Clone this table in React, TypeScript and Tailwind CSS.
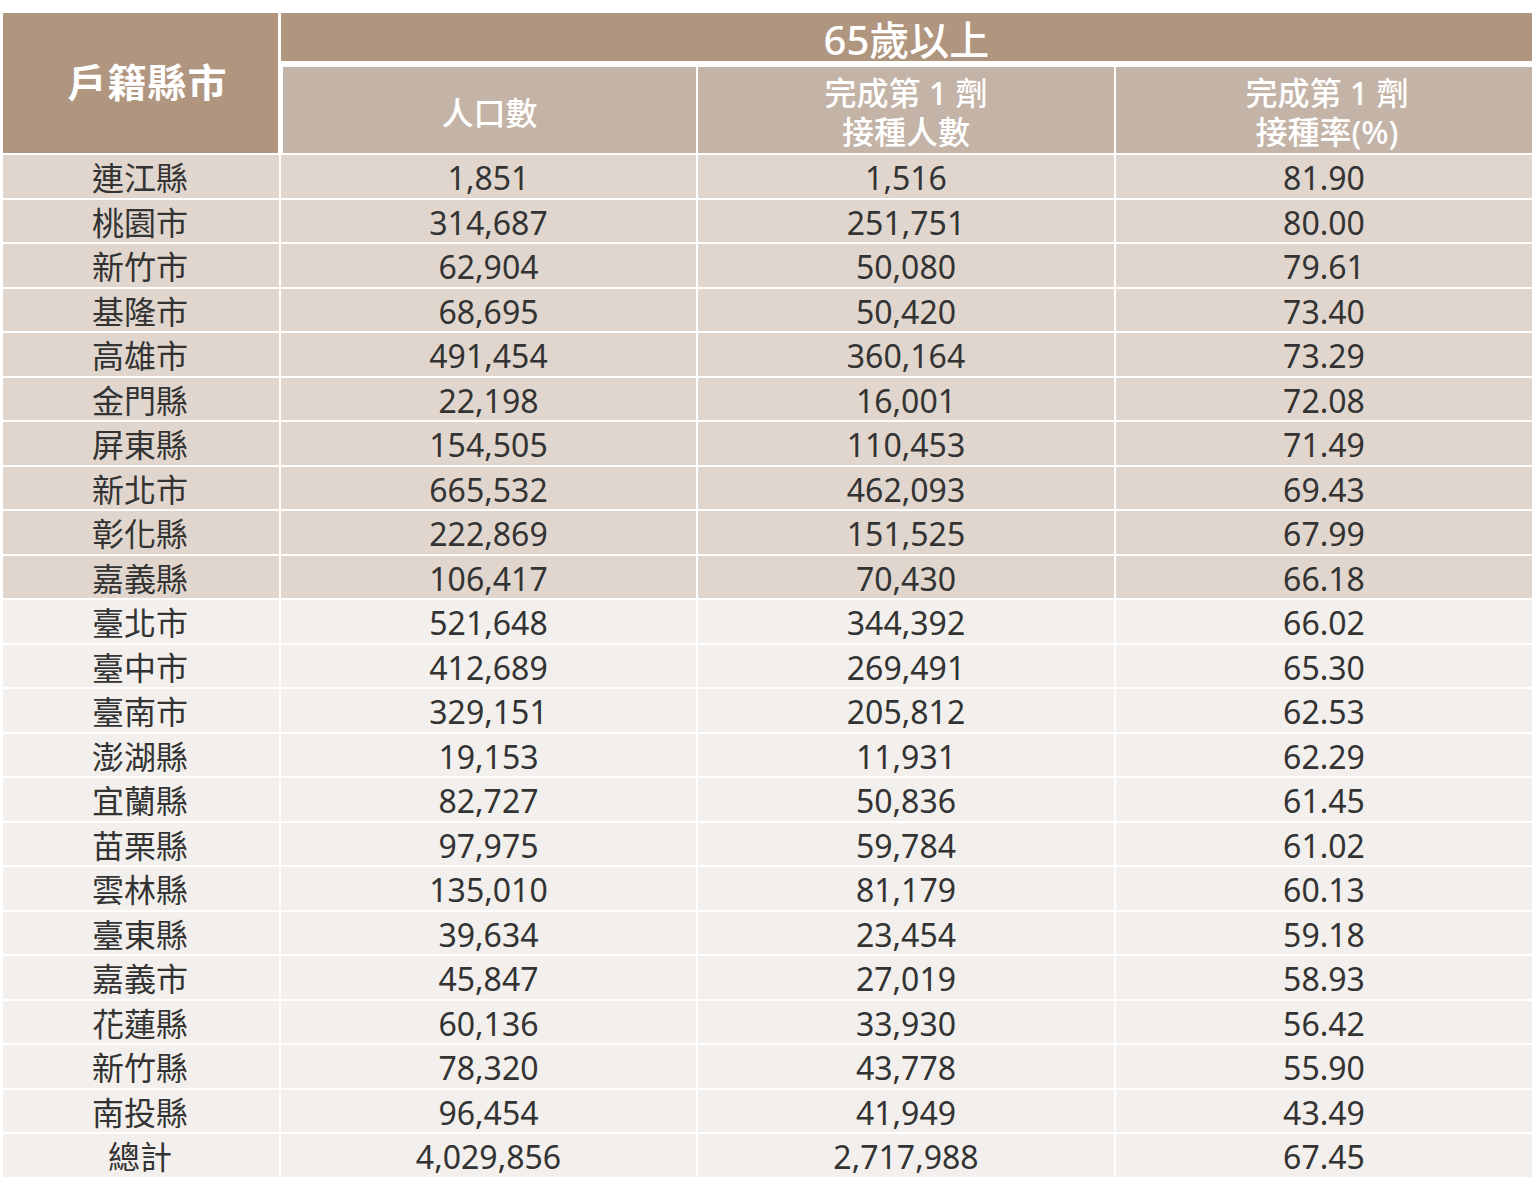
const rows: [string, string, string, string][] = [
  ["連江縣", "1,851", "1,516", "81.90"],
  ["桃園市", "314,687", "251,751", "80.00"],
  ["新竹市", "62,904", "50,080", "79.61"],
  ["基隆市", "68,695", "50,420", "73.40"],
  ["高雄市", "491,454", "360,164", "73.29"],
  ["金門縣", "22,198", "16,001", "72.08"],
  ["屏東縣", "154,505", "110,453", "71.49"],
  ["新北市", "665,532", "462,093", "69.43"],
  ["彰化縣", "222,869", "151,525", "67.99"],
  ["嘉義縣", "106,417", "70,430", "66.18"],
  ["臺北市", "521,648", "344,392", "66.02"],
  ["臺中市", "412,689", "269,491", "65.30"],
  ["臺南市", "329,151", "205,812", "62.53"],
  ["澎湖縣", "19,153", "11,931", "62.29"],
  ["宜蘭縣", "82,727", "50,836", "61.45"],
  ["苗栗縣", "97,975", "59,784", "61.02"],
  ["雲林縣", "135,010", "81,179", "60.13"],
  ["臺東縣", "39,634", "23,454", "59.18"],
  ["嘉義市", "45,847", "27,019", "58.93"],
  ["花蓮縣", "60,136", "33,930", "56.42"],
  ["新竹縣", "78,320", "43,778", "55.90"],
  ["南投縣", "96,454", "41,949", "43.49"],
  ["總計", "4,029,856", "2,717,988", "67.45"],
];

export default function App() {
  return (
    <div
      className="min-h-screen bg-white pl-[3px] pt-[13px]"
      style={{ fontFamily: '"Noto Sans", "Noto Sans CJK TC", sans-serif' }}
    >
      <div className="w-[1529px]">
        {/* HEADER */}
        <div className="flex h-[140px]">
          <div className="flex w-[275px] items-center justify-center bg-[#b0957f] pb-[2px] pl-[14px] text-[39px] font-bold tracking-[1px] text-white">
            戶籍縣市
          </div>
          <div className="ml-[3px] flex flex-1 flex-col">
            <div className="flex h-[48px] items-center justify-center bg-[#b0957f] pt-[6px] text-[40px] font-medium text-white">
              65歲以上
            </div>
            <div className="mt-[6px] ml-[2px] grid h-[86px] grid-cols-[413px_416px_416px] gap-x-[2px] text-[32px] font-medium leading-[39px] text-white">
              <div className="flex items-center justify-center bg-[#c4b3a7] pt-[4px]">
                人口數
              </div>
              <div className="flex flex-col items-center justify-center bg-[#c4b3a7] pt-[4px]">
                <span>完成第 1 劑</span>
                <span>接種人數</span>
              </div>
              <div className="flex flex-col items-center justify-center bg-[#c4b3a7] pt-[4px] pl-[6px]">
                <span>完成第 1 劑</span>
                <span>接種率(%)</span>
              </div>
            </div>
          </div>
        </div>

        {/* BODY */}
        <div className="mt-[2px] flex flex-col gap-y-[2px] text-[32px] text-[#333333]">
          {rows.map((r, i) => (
            <div
              key={r[0]}
              className="grid h-[42.5px] grid-cols-[276px_415px_416px_416px] gap-x-[2px]"
            >
              {r.map((c, j) => (
                <div
                  key={j}
                  className={
                    "flex items-center justify-center pt-[4px] leading-none " +
                    (i < 10 ? "bg-[#e0d6cd]" : "bg-[#f2efec]") +
                    (j === 0 ? " pr-[2px]" : "")
                  }
                >
                  {c}
                </div>
              ))}
            </div>
          ))}
        </div>
      </div>
    </div>
  );
}
